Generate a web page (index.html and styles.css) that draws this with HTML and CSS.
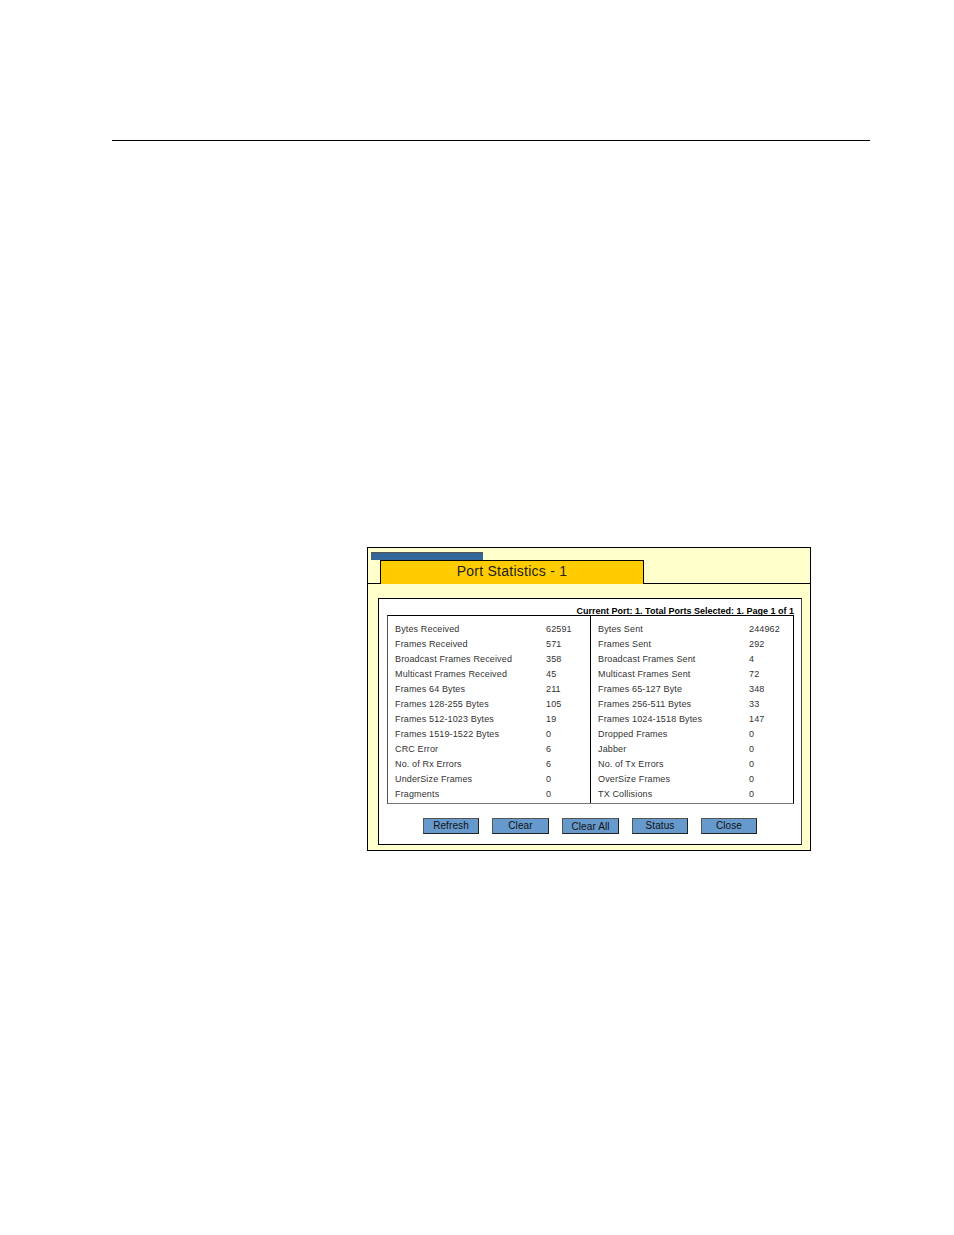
FILE: index.html
```html
<!DOCTYPE html>
<html lang="en">
<head>
    <meta charset="UTF-8">
    <title>Port Statistics</title>
    <link rel="stylesheet" href="styles.css">
</head>
<body>
    <div class="page-rule"></div>
    <div class="panel">
        <div class="panel__tab"></div>
        <div class="panel__head">
            <div class="panel__title">Port Statistics - 1</div>
        </div>
        <div class="box">
            <div class="box__info">Current Port: 1. Total Ports Selected: 1. Page 1 of 1</div>
            <div class="stats">
                <div class="stats__col">
                    <div class="row"><span class="row__label">Bytes Received</span><span>62591</span></div>
                    <div class="row"><span class="row__label">Frames Received</span><span>571</span></div>
                    <div class="row"><span class="row__label">Broadcast Frames Received</span><span>358</span></div>
                    <div class="row"><span class="row__label">Multicast Frames Received</span><span>45</span></div>
                    <div class="row"><span class="row__label">Frames 64 Bytes</span><span>211</span></div>
                    <div class="row"><span class="row__label">Frames 128-255 Bytes</span><span>105</span></div>
                    <div class="row"><span class="row__label">Frames 512-1023 Bytes</span><span>19</span></div>
                    <div class="row"><span class="row__label">Frames 1519-1522 Bytes</span><span>0</span></div>
                    <div class="row"><span class="row__label">CRC Error</span><span>6</span></div>
                    <div class="row"><span class="row__label">No. of Rx Errors</span><span>6</span></div>
                    <div class="row"><span class="row__label">UnderSize Frames</span><span>0</span></div>
                    <div class="row"><span class="row__label">Fragments</span><span>0</span></div>
                </div>
                <div class="stats__col stats__col--right">
                    <div class="row"><span class="row__label">Bytes Sent</span><span>244962</span></div>
                    <div class="row"><span class="row__label">Frames Sent</span><span>292</span></div>
                    <div class="row"><span class="row__label">Broadcast Frames Sent</span><span>4</span></div>
                    <div class="row"><span class="row__label">Multicast Frames Sent</span><span>72</span></div>
                    <div class="row"><span class="row__label">Frames 65-127 Byte</span><span>348</span></div>
                    <div class="row"><span class="row__label">Frames 256-511 Bytes</span><span>33</span></div>
                    <div class="row"><span class="row__label">Frames 1024-1518 Bytes</span><span>147</span></div>
                    <div class="row"><span class="row__label">Dropped Frames</span><span>0</span></div>
                    <div class="row"><span class="row__label">Jabber</span><span>0</span></div>
                    <div class="row"><span class="row__label">No. of Tx Errors</span><span>0</span></div>
                    <div class="row"><span class="row__label">OverSize Frames</span><span>0</span></div>
                    <div class="row"><span class="row__label">TX Collisions</span><span>0</span></div>
                </div>
            </div>
            <div class="buttons">
                <div class="btn">Refresh</div>
                <div class="btn btn--wide">Clear</div>
                <div class="btn btn--wide btn--low">Clear All</div>
                <div class="btn">Status</div>
                <div class="btn">Close</div>
            </div>
        </div>
    </div>
</body>
</html>
```

FILE: styles.css
```css
body {
    margin: 0;
    padding: 140px 0 0;
    background: #fff;
    font-family: "Liberation Sans", Arial, sans-serif;
}

.page-rule {
    height: 1px;
    margin-left: 112px;
    width: 758px;
    background: #000;
}

.panel {
    position: relative;
    box-sizing: border-box;
    width: 444px;
    height: 304px;
    margin: 406px 0 0 367px;
    background: #ffffcc;
    border: 1px solid #000;
}

.panel__tab {
    position: absolute;
    top: 4px;
    left: 3px;
    width: 112px;
    height: 8px;
    background: #336699;
    border-top: 1px solid #555;
    box-sizing: border-box;
}

.panel__head {
    height: 36px;
    padding: 12px 0 0 12px;
    box-sizing: border-box;
    border-bottom: 1px solid #000;
}

.panel__title {
    box-sizing: border-box;
    width: 264px;
    height: 24px;
    background: #ffcc00;
    border: 1px solid #000;
    border-bottom: 0;
    text-align: center;
    font-size: 14px;
    line-height: 20px;
    letter-spacing: 0.25px;
    color: #222;
}

.box {
    box-sizing: border-box;
    width: 424px;
    height: 247px;
    margin: 14px 0 0 10px;
    padding: 8px 7px 0 8px;
    background: #fff;
    border: 1px solid #000;
    border-right-color: #444;
}

.box__info {
    height: 8px;
    text-align: right;
    font-size: 9px;
    line-height: 8px;
    font-weight: bold;
    color: #000;
}

.stats {
    display: flex;
    box-sizing: border-box;
    height: 189px;
    border: 1px solid #000;
    border-left-color: #555;
    border-bottom-color: #777;
    font-size: 9px;
    letter-spacing: 0.14px;
    color: #333;
}

.stats__col {
    box-sizing: border-box;
    width: 202px;
    padding: 6px 0 0 7px;
}

.stats__col--right {
    flex: 1;
    border-left: 1px solid #000;
}

.row {
    display: flex;
    height: 15px;
    line-height: 15px;
    white-space: nowrap;
}

.row__label {
    width: 151px;
}

.buttons {
    display: flex;
    gap: 13px;
    margin: 14px 0 0 36px;
}

.btn {
    box-sizing: border-box;
    width: 56px;
    height: 16px;
    background: #6699cc;
    border: 1px solid #555;
    border-right-color: #222;
    border-bottom-color: #222;
    text-align: center;
    font-size: 10px;
    line-height: 14px;
    letter-spacing: 0.1px;
    color: #111;
}

.btn--wide {
    width: 57px;
}

.btn--low {
    line-height: 15px;
}
```
